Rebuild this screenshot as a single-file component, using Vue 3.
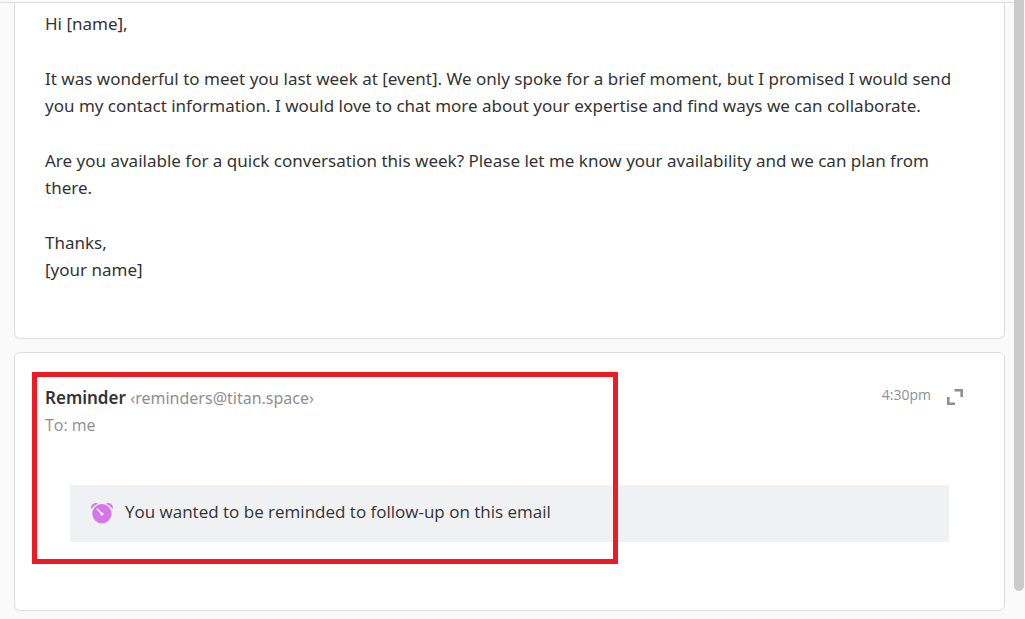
<script setup>
const paragraphs = [
  'Hi [name],',
  'It was wonderful to meet you last week at [event]. We only spoke for a brief moment, but I promised I would send you my contact information. I would love to chat more about your expertise and find ways we can collaborate.',
  'Are you available for a quick conversation this week? Please let me know your availability and we can plan from there.',
  'Thanks,\n[your name]'
]
</script>

<template>
  <div class="page">
    <main class="thread">
      <article class="card message">
        <p v-for="(text, i) in paragraphs" :key="i">{{ text }}</p>
      </article>

      <article class="card reminder">
        <header class="head">
          <div class="sender">
            <h2>Reminder <span class="address">‹reminders@titan.space›</span></h2>
            <div class="to">To: me</div>
          </div>
          <time class="time">4:30pm</time>
          <button class="expand" type="button" aria-label="Expand message">
            <svg width="18" height="18" viewBox="0 0 18 18" fill="none" stroke="#8e8e8e" stroke-width="2.600">
              <path d="M8.500 2.300H15.700V9" />
              <path d="M2.300 9V15.700H9" />
            </svg>
          </button>
        </header>

        <div class="notice">
          <svg width="24" height="24" viewBox="0 0 24 24" aria-hidden="true">
            <circle cx="11.900" cy="13.700" r="9.600" fill="#d873ee" />
            <path d="M1 8.600C0.600 5 4 2 7.700 3.200L7.200 4.200C4.800 5 3 6.600 1.900 8.600Z" fill="#d873ee" />
            <path d="M23 8.600C23.400 5 20 2 16.300 3.200L16.800 4.200C19.200 5 21 6.600 22.100 8.600Z" fill="#d873ee" />
            <path d="M7.200 9L11.500 13.500" stroke="#fff" stroke-width="1.500" stroke-linecap="round" />
            <circle cx="12" cy="14" r="1.500" fill="#fff" />
          </svg>
          <span>You wanted to be reminded to follow-up on this email</span>
        </div>

        <div class="highlight" aria-hidden="true"></div>
      </article>
    </main>
    <div class="scroll" aria-hidden="true"><div class="thumb"></div></div>
  </div>
</template>

<style>
body {
  margin: 0;
  background: #fafafa;
}
</style>

<style scoped>
.page {
  display: flex;
  min-height: 100vh;
  box-sizing: border-box;
  font-family: "Segoe UI", "Open Sans", "Noto Sans", sans-serif;
  font-size: 17px;
  line-height: 27px;
  color: #333;
}

.thread {
  flex: 1;
  min-width: 0;
  margin-top: 2px;
  padding: 0 9px 8px 14px;
  border-top: 1px solid #ddd;
}

.card {
  position: relative;
  box-sizing: border-box;
  background: #fff;
  border: 1px solid #dcdcdc;
  border-radius: 6px;
}

.message {
  padding: 7px 50px 55px 30px;
  border-top: 0;
  border-radius: 0 0 6px 6px;
}

.message,
h2 {
  font-family: "Segoe UI", "Noto Sans", "Open Sans", sans-serif;
}

.message p {
  margin: 0 0 28px;
  white-space: pre-line;
}

.message p:last-child {
  margin-bottom: 0;
}

.reminder {
  margin-top: 13px;
  padding: 31px 40px 68px 30px;
}

.head {
  display: flex;
  align-items: flex-start;
}

.sender {
  flex: 1;
}

h2 {
  margin: 0;
  font-size: 17px;
  font-weight: 600;
}

.address {
  font-size: 16px;
  font-weight: 400;
  color: #8e8e8e;
}

.to {
  font-size: 16px;
  color: #8e8e8e;
}

.time {
  margin-right: 15px;
  font-size: 14px;
  line-height: 22px;
  color: #8e8e8e;
}

.expand {
  display: flex;
  margin: 4px 0 0;
  padding: 0;
  border: 0;
  background: none;
  cursor: pointer;
}

.notice {
  display: flex;
  align-items: center;
  gap: 11px;
  margin: 46px 15px 0 25px;
  padding: 13px 20px 17px;
  background: #f0f1f3;
}

.highlight {
  position: absolute;
  top: 19px;
  left: 17px;
  width: 576px;
  height: 182px;
  border: 5px solid #ed1c24;
  pointer-events: none;
}

.scroll {
  width: 10px;
  height: 100vh;
  margin-right: 1px;
}

.thumb {
  height: 95.5%;
  background: #cbcbcb;
  border-radius: 0 0 5px 5px;
}
</style>
